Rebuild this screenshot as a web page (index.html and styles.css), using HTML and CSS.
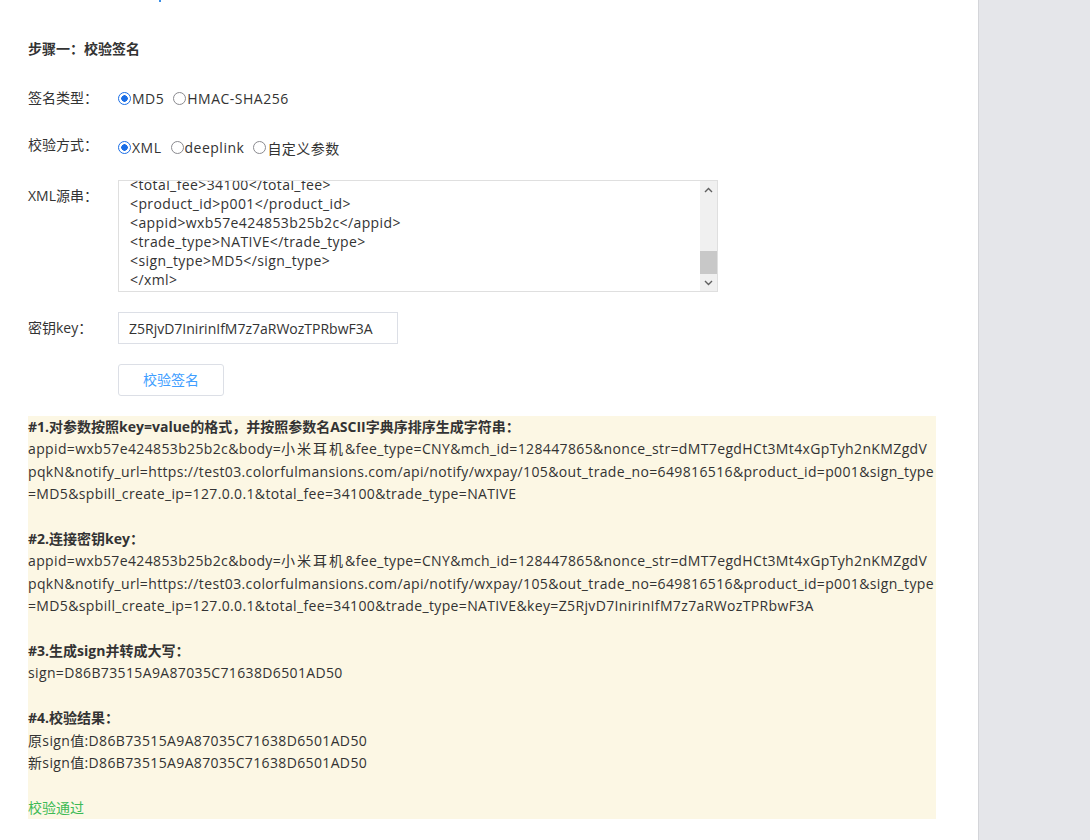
FILE: index.html
```html
<!DOCTYPE html>
<html lang="zh-CN">
<head>
    <meta charset="UTF-8">
    <meta name="viewport" content="width=device-width, initial-scale=1.0">
    <title>校验签名</title>
    <link rel="stylesheet" href="styles.css">
</head>
<body>
    <div class="page">
        <div class="main">
            <div class="top-mark"></div>
            <div class="step-title">步骤一：校验签名</div>

            <div class="form-row row-type">
                <label class="form-label">签名类型：</label>
                <div class="radio-group">
                    <label class="radio"><input type="radio" name="signType" checked>MD5</label>
                    <label class="radio"><input type="radio" name="signType">HMAC-SHA256</label>
                </div>
            </div>

            <div class="form-row row-mode">
                <label class="form-label">校验方式：</label>
                <div class="radio-group">
                    <label class="radio"><input type="radio" name="mode" checked>XML</label>
                    <label class="radio"><input type="radio" name="mode">deeplink</label>
                    <label class="radio"><input type="radio" name="mode">自定义参数</label>
                </div>
            </div>

            <div class="form-row row-xml">
                <label class="form-label">XML源串：</label>
                <div class="xml-box">
                    <textarea id="xmlSource" class="xml-input" spellcheck="false">&lt;xml&gt;
&lt;body&gt;小米耳机&lt;/body&gt;
&lt;fee_type&gt;CNY&lt;/fee_type&gt;
&lt;mch_id&gt;128447865&lt;/mch_id&gt;
&lt;nonce_str&gt;dMT7egdHCt3Mt4xGpTyh2nKMZgdVpqkN&lt;/nonce_str&gt;
&lt;notify_url&gt;https://test03.colorfulmansions.com/api/notify/wxpay/105&lt;/notify_url&gt;
&lt;out_trade_no&gt;649816516&lt;/out_trade_no&gt;
&lt;spbill_create_ip&gt;127.0.0.1&lt;/spbill_create_ip&gt;
&lt;total_fee&gt;34100&lt;/total_fee&gt;
&lt;product_id&gt;p001&lt;/product_id&gt;
&lt;appid&gt;wxb57e424853b25b2c&lt;/appid&gt;
&lt;trade_type&gt;NATIVE&lt;/trade_type&gt;
&lt;sign_type&gt;MD5&lt;/sign_type&gt;
&lt;/xml&gt;</textarea>
                    <div class="scrollbar">
                        <div class="scroll-btn">
                            <svg width="9" height="6" viewBox="0 0 9 6"><path d="M1 5L4.5 1.5L8 5" fill="none" stroke="#606060" stroke-width="1.4"/></svg>
                        </div>
                        <div class="scroll-track"><div class="scroll-thumb"></div></div>
                        <div class="scroll-btn">
                            <svg width="9" height="6" viewBox="0 0 9 6"><path d="M1 1L4.5 4.5L8 1" fill="none" stroke="#606060" stroke-width="1.4"/></svg>
                        </div>
                    </div>
                </div>
            </div>

            <div class="form-row row-key">
                <label class="form-label">密钥key：</label>
                <input type="text" class="key-input" value="Z5RjvD7InirinIfM7z7aRWozTPRbwF3A">
            </div>

            <div class="form-row row-btn">
                <span class="form-label"></span>
                <button type="button" class="btn">校验签名</button>
            </div>

            <div class="result">
                <div class="result-title">#1.对参数按照key=value的格式，并按照参数名ASCII字典序排序生成字符串：</div>
                <div class="data">appid=wxb57e424853b25b2c&amp;body=<span class="cn">小米耳机</span>&amp;fee_type=CNY&amp;mch_id=128447865&amp;nonce_str=dMT7egdHCt3Mt4xGpTyh2nKMZgdVpqkN&amp;notify_url=https://test03.colorfulmansions.com/api/notify/wxpay/105&amp;out_trade_no=649816516&amp;product_id=p001&amp;sign_type=MD5&amp;spbill_create_ip=127.0.0.1&amp;total_fee=34100&amp;trade_type=NATIVE</div>
                <br>
                <div class="result-title">#2.连接密钥key：</div>
                <div class="data">appid=wxb57e424853b25b2c&amp;body=<span class="cn">小米耳机</span>&amp;fee_type=CNY&amp;mch_id=128447865&amp;nonce_str=dMT7egdHCt3Mt4xGpTyh2nKMZgdVpqkN&amp;notify_url=https://test03.colorfulmansions.com/api/notify/wxpay/105&amp;out_trade_no=649816516&amp;product_id=p001&amp;sign_type=MD5&amp;spbill_create_ip=127.0.0.1&amp;total_fee=34100&amp;trade_type=NATIVE&amp;key=Z5RjvD7InirinIfM7z7aRWozTPRbwF3A</div>
                <br>
                <div class="result-title">#3.生成sign并转成大写：</div>
                <div class="data">sign=D86B73515A9A87035C71638D6501AD50</div>
                <br>
                <div class="result-title">#4.校验结果：</div>
                <div class="data">原sign值:D86B73515A9A87035C71638D6501AD50</div>
                <div class="data">新sign值:D86B73515A9A87035C71638D6501AD50</div>
                <br>
                <div class="pass">校验通过</div>
            </div>
        </div>
        <div class="aside"></div>
    </div>
    <script>
        // keep the xml source scrolled to the end
        var xml = document.getElementById('xmlSource');
        xml.scrollTop = xml.scrollHeight;
    </script>
</body>
</html>
```

FILE: styles.css
```css
html, body {
    margin: 0;
    padding: 0;
    height: 100%;
}

body {
    font-family: "Open Sans", "Noto Sans CJK SC", sans-serif;
    font-size: 14px;
    color: #333;
    overflow: hidden;
}

.page {
    display: flex;
    height: 840px;
}

.main {
    flex: 1;
    padding: 0 0 0 28px;
    background: #fff;
}

.top-mark {
    width: 2px;
    height: 2px;
    margin-left: 131px;
    background: #3a8ee6;
}

.aside {
    width: 111px;
    background: #e5e6ea;
    border-left: 1px solid #d4d5d9;
}

.step-title {
    margin-top: 36px;
    line-height: 22px;
    font-weight: bold;
}

.form-row {
    display: flex;
    align-items: flex-start;
}

.form-label {
    width: 90px;
    flex-shrink: 0;
    line-height: 32px;
}

.row-type {
    margin-top: 22px;
}

.row-mode {
    margin-top: 15px;
}

.row-xml {
    margin-top: 19px;
}

.row-key {
    margin-top: 20px;
}

.row-btn {
    margin-top: 20px;
}

.radio-group {
    display: flex;
    align-items: center;
    height: 32px;
    gap: 9px;
    letter-spacing: 0.5px;
}

.row-mode .radio-group {
    padding-top: 5px;
    height: 27px;
}

.radio {
    display: flex;
    align-items: center;
}

.radio input {
    appearance: none;
    -webkit-appearance: none;
    box-sizing: border-box;
    margin: 0 1px 0 0;
    width: 13px;
    height: 13px;
    border: 1.5px solid #8a8a8f;
    border-radius: 50%;
    background: #fff;
}

.radio input:checked {
    border-color: #1a6ee6;
    background: radial-gradient(circle, #1a6ee6 0, #1a6ee6 3px, #fff 3.5px);
}

.xml-box {
    display: flex;
    width: 600px;
    height: 112px;
    box-sizing: border-box;
    border: 1px solid #dfdfdf;
}

.xml-input {
    flex: 1;
    height: 110px;
    box-sizing: border-box;
    margin: 0;
    padding: 0 0 2px 11px;
    border: none;
    font-family: "Open Sans", "Noto Sans CJK SC", sans-serif;
    font-size: 14px;
    line-height: 19px;
    letter-spacing: 0.4px;
    color: #333;
    resize: none;
    outline: none;
    white-space: pre;
    overflow: hidden;
    scrollbar-width: none;
}

.scrollbar {
    width: 17px;
    display: flex;
    flex-direction: column;
    background: #f0f0f0;
}

.scroll-btn {
    height: 17px;
    display: flex;
    align-items: center;
    justify-content: center;
}

.scroll-track {
    flex: 1;
    display: flex;
    flex-direction: column;
    justify-content: flex-end;
}

.scroll-thumb {
    height: 23px;
    background: #c8c8c8;
}

.key-input {
    width: 280px;
    height: 32px;
    box-sizing: border-box;
    margin: 0;
    padding: 0 10px;
    border: 1px solid #dcdfe6;
    font-family: "Open Sans", "Noto Sans CJK SC", sans-serif;
    font-size: 14px;
    color: #333;
    outline: none;
}

.btn {
    width: 106px;
    height: 32px;
    padding: 0;
    background: #fff;
    border: 1px solid #dcdfe6;
    border-radius: 3px;
    color: #409eff;
    font-family: "Open Sans", "Noto Sans CJK SC", sans-serif;
    font-size: 14px;
    line-height: 28px;
    cursor: pointer;
}

.result {
    margin-top: 20px;
    width: 908px;
    background: #fcf7e4;
    line-height: 22.4px;
    word-break: break-all;
}

.result br {
    display: block;
}

.result-title {
    font-weight: bold;
}

.data {
    letter-spacing: 0.36px;
}

.data .cn {
    letter-spacing: 2px;
}

.pass {
    color: #3cba55;
}
```
